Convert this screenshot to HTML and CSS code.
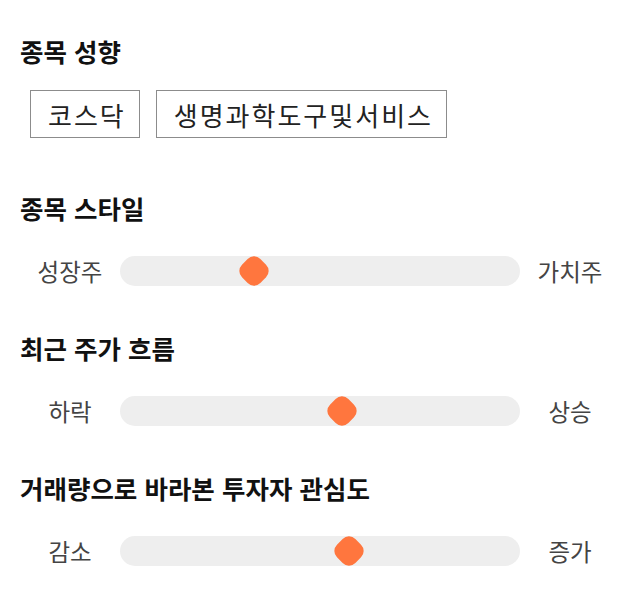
FILE: index.html
```html
<!DOCTYPE html>
<html lang="ko">
<head>
  <meta charset="UTF-8" />
  <meta name="viewport" content="width=device-width, initial-scale=1.0"/>
  <title>종목 정보</title>
  <link rel="stylesheet" href="styles.css">
</head>
<body>
  <div class="panel">

    <!-- 종목 성향 -->
    <section class="secao secao-tags">
      <h2>종목 성향</h2>
      <div class="tags">
        <span class="tag">코스닥</span>
        <span class="tag">생명과학도구및서비스</span>
      </div>
    </section>

    <!-- 종목 스타일 -->
    <section class="secao">
      <h2>종목 스타일</h2>
      <div class="slider">
        <span class="rotulo">성장주</span>
        <div class="trilho"><div class="ponteiro" style="left: 33.6%"></div></div>
        <span class="rotulo">가치주</span>
      </div>
    </section>

    <!-- 최근 주가 흐름 -->
    <section class="secao">
      <h2>최근 주가 흐름</h2>
      <div class="slider">
        <span class="rotulo">하락</span>
        <div class="trilho"><div class="ponteiro" style="left: 55.6%"></div></div>
        <span class="rotulo">상승</span>
      </div>
    </section>

    <!-- 거래량 -->
    <section class="secao">
      <h2>거래량으로 바라본 투자자 관심도</h2>
      <div class="slider">
        <span class="rotulo">감소</span>
        <div class="trilho"><div class="ponteiro" style="left: 57.2%"></div></div>
        <span class="rotulo">증가</span>
      </div>
    </section>

  </div>
</body>
</html>
```

FILE: styles.css
```css
* {
  box-sizing: border-box;
}

body, html {
  margin: 0;
  padding: 0;
  background: #fff;
  font-family: "Noto Sans CJK KR", "Noto Sans", sans-serif;
  color: #111;
}

.panel {
  display: flex;
  flex-direction: column;
  gap: 47px;
  padding: 36px 20px 0;
}

.secao-tags {
  margin-bottom: 8px;
}

h2 {
  margin: 0 0 33px;
  font-size: 25.5px;
  line-height: 30px;
  font-weight: bold;
  color: #111;
}

.secao-tags h2 {
  margin-bottom: 24px;
}

.tags {
  display: flex;
  gap: 16px;
  margin-left: 10px;
}

.tag {
  display: flex;
  align-items: center;
  height: 48px;
  padding: 0 13px 0 17px;
  border: 1px solid #8c8c8c;
  font-size: 26px;
  letter-spacing: 2px;
  color: #222;
}

.slider {
  display: grid;
  grid-template-columns: 100px 400px 100px;
  align-items: center;
  height: 30px;
}

.rotulo {
  text-align: center;
  font-size: 23.5px;
  line-height: 30px;
  color: #444;
}

.trilho {
  position: relative;
  height: 30px;
  background: #eee;
  border-radius: 15px;
}

.ponteiro {
  position: absolute;
  top: 50%;
  width: 26px;
  height: 26px;
  background: #ff763e;
  border-radius: 9px;
  transform: translate(-50%, -50%) rotate(45deg);
}
```
